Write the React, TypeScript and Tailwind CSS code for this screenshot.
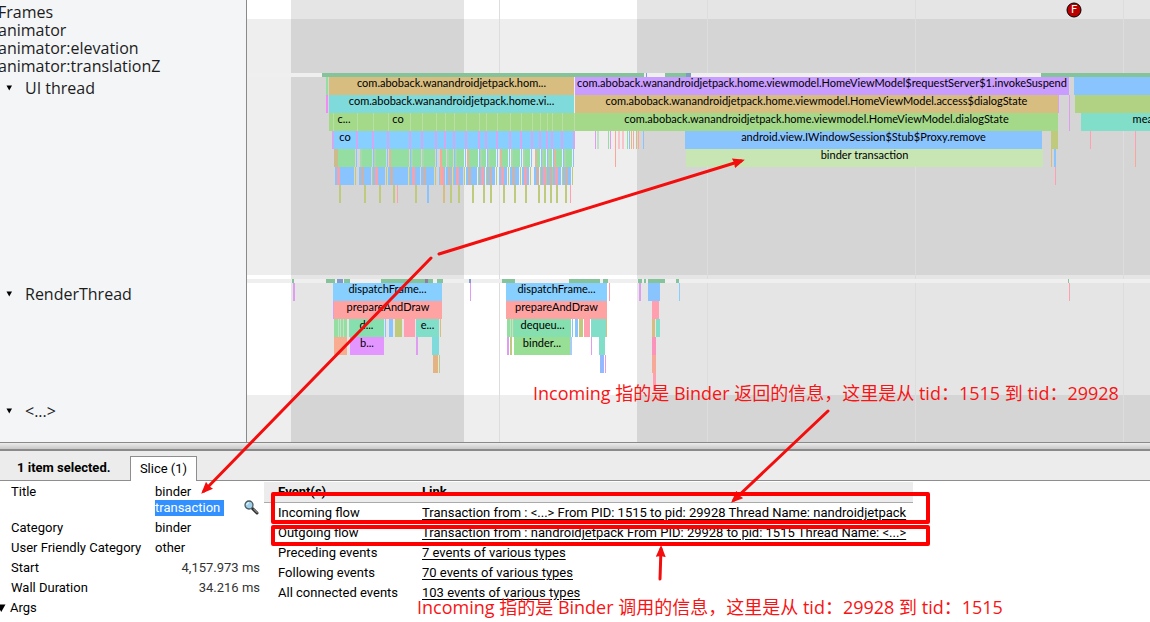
import { useState } from "react";

type Slice = {
  row: number;
  x: number;
  end: number;
  color: string;
  label?: string;
  labelX?: number;
};

const LABEL_WIDTH = 247;
const ROW_HEIGHT = 18;

const BLUE = "#8ac4ff";
const SKY = "#87cfff";
const GREEN = "#93dea0";
const LIME = "#a5d98a";
const TAN = "#d7be80";
const CYAN = "#7fdbdb";
const TEAL = "#80dec9";
const PINK = "#ff9fb0";
const SALMON = "#f7a896";
const ORCHID = "#df9df2";
const VIOLET = "#c99cff";
const OLIVE = "#c0ca7c";

const uiSlices: Slice[] = [
  { row: 0, x: 326, end: 328, color: GREEN },
  { row: 0, x: 329, end: 574, color: TAN, label: "com.aboback.wanandroidjetpack.hom..." },
  { row: 0, x: 575, end: 1069, color: VIOLET, label: "com.aboback.wanandroidjetpack.home.viewmodel.HomeViewModel$requestServer$1.invokeSuspend" },
  { row: 0, x: 1074, end: 2400, color: BLUE },
  { row: 1, x: 326, end: 328, color: "#f08cf2" },
  { row: 1, x: 329, end: 574, color: CYAN, label: "com.aboback.wanandroidjetpack.home.vi..." },
  { row: 1, x: 575, end: 1058, color: TAN, label: "com.aboback.wanandroidjetpack.home.viewmodel.HomeViewModel.access$dialogState" },
  { row: 1, x: 1058, end: 1059, color: ORCHID },
  { row: 1, x: 1069, end: 1070, color: ORCHID },
  { row: 1, x: 1075, end: 2400, color: "#b1d183" },
  { row: 2, x: 329, end: 574, color: LIME },
  { row: 2, x: 575, end: 1058, color: LIME, label: "com.aboback.wanandroidjetpack.home.viewmodel.HomeViewModel.dialogState" },
  { row: 2, x: 1069, end: 1070, color: ORCHID },
  { row: 2, x: 1081, end: 2400, color: TEAL, label: "measure", labelX: 1153 },
  { row: 3, x: 333, end: 575, color: SKY },
  { row: 3, x: 595, end: 596, color: ORCHID },
  { row: 3, x: 597, end: 599, color: "#bfe3c6" },
  { row: 3, x: 608, end: 609, color: GREEN },
  { row: 3, x: 610, end: 611, color: ORCHID },
  { row: 3, x: 615, end: 616, color: SALMON },
  { row: 3, x: 618, end: 620, color: "#f8c3c9" },
  { row: 3, x: 622, end: 624, color: "#f8c3c9" },
  { row: 3, x: 627, end: 628, color: GREEN },
  { row: 3, x: 629, end: 630, color: BLUE },
  { row: 3, x: 631, end: 632, color: TAN },
  { row: 3, x: 633, end: 634, color: SALMON },
  { row: 3, x: 636, end: 637, color: TAN },
  { row: 3, x: 638, end: 639, color: SALMON },
  { row: 3, x: 643, end: 644, color: BLUE },
  { row: 3, x: 685, end: 1042, color: BLUE, label: "android.view.IWindowSession$Stub$Proxy.remove" },
  { row: 3, x: 1051, end: 1058, color: OLIVE },
  { row: 3, x: 1090, end: 1091, color: PINK },
  { row: 3, x: 1135, end: 1136, color: PINK },
  { row: 4, x: 615, end: 616, color: SALMON },
  { row: 4, x: 686, end: 1043, color: "#c8e6b4", label: "binder transaction" },
  { row: 4, x: 1051, end: 1052, color: TAN },
  { row: 4, x: 1054, end: 1056, color: BLUE },
  { row: 4, x: 1135, end: 1136, color: SALMON },
  { row: 5, x: 1055, end: 1056, color: PINK },
];

const renderSlices: Slice[] = [
  { row: 0, x: 293, end: 295, color: ORCHID },
  { row: 0, x: 333, end: 442, color: SKY, label: "dispatchFrame..." },
  { row: 0, x: 470, end: 471, color: ORCHID },
  { row: 0, x: 506, end: 607, color: SKY, label: "dispatchFrame..." },
  { row: 0, x: 609, end: 610, color: PINK },
  { row: 0, x: 639, end: 641, color: ORCHID },
  { row: 0, x: 648, end: 660, color: BLUE },
  { row: 0, x: 679, end: 680, color: SKY },
  { row: 0, x: 1069, end: 1070, color: PINK },
  { row: 1, x: 333, end: 334, color: ORCHID },
  { row: 1, x: 334, end: 442, color: "#ffa2a2", label: "prepareAndDraw" },
  { row: 1, x: 506, end: 607, color: "#ffa2a2", label: "prepareAndDraw" },
  { row: 1, x: 652, end: 659, color: PINK },
  { row: 2, x: 334, end: 347, color: GREEN },
  { row: 2, x: 349, end: 384, color: "#86dfae", label: "d..." },
  { row: 2, x: 385, end: 386, color: BLUE },
  { row: 2, x: 389, end: 393, color: BLUE },
  { row: 2, x: 395, end: 402, color: OLIVE },
  { row: 2, x: 404, end: 415, color: PINK },
  { row: 2, x: 416, end: 439, color: TEAL, label: "e..." },
  { row: 2, x: 440, end: 441, color: TAN },
  { row: 2, x: 507, end: 514, color: GREEN },
  { row: 2, x: 514, end: 571, color: "#86dfae", label: "dequeu..." },
  { row: 2, x: 572, end: 573, color: BLUE },
  { row: 2, x: 575, end: 578, color: BLUE },
  { row: 2, x: 579, end: 583, color: OLIVE },
  { row: 2, x: 584, end: 590, color: PINK },
  { row: 2, x: 591, end: 606, color: TEAL },
  { row: 2, x: 606, end: 607, color: TAN },
  { row: 2, x: 652, end: 655, color: TAN },
  { row: 2, x: 656, end: 660, color: TEAL },
  { row: 3, x: 334, end: 347, color: "#f8ac90" },
  { row: 3, x: 350, end: 384, color: "#e396ff", label: "b..." },
  { row: 3, x: 416, end: 418, color: ORCHID },
  { row: 3, x: 432, end: 439, color: CYAN },
  { row: 3, x: 507, end: 509, color: ORCHID },
  { row: 3, x: 510, end: 512, color: OLIVE },
  { row: 3, x: 514, end: 570, color: "#98de94", label: "binder..." },
  { row: 3, x: 570, end: 572, color: "#a8cdf5" },
  { row: 3, x: 591, end: 592, color: ORCHID },
  { row: 3, x: 599, end: 605, color: TEAL },
  { row: 3, x: 652, end: 656, color: "#fa94bb" },
  { row: 4, x: 433, end: 438, color: "#e3b384" },
  { row: 4, x: 439, end: 440, color: OLIVE },
  { row: 4, x: 600, end: 604, color: "#93baff" },
  { row: 4, x: 605, end: 606, color: ORCHID },
  { row: 4, x: 652, end: 656, color: SALMON },
  { row: 5, x: 653, end: 656, color: PINK },
];

// Boundaries between the short calls nested under the first UI slice.
const callEdges = [333, 357, 373, 388, 410, 422, 436, 445, 454, 466, 479, 486, 497, 510, 521, 532, 540, 547, 552, 562, 574];

const nestedCalls = [
  [338, 355], [362, 372], [376, 386], [391, 409], [413, 421], [424, 435], [442, 446],
  [449, 453], [457, 464], [469, 478], [482, 486], [490, 496], [502, 508], [513, 520],
  [525, 530], [537, 540], [544, 546], [550, 552], [556, 562], [566, 572],
];

const leafCalls = [
  { x: 339, color: OLIVE }, { x: 364, color: OLIVE }, { x: 379, color: OLIVE }, { x: 393, color: OLIVE },
  { x: 397, color: PINK }, { x: 415, color: OLIVE }, { x: 427, color: BLUE }, { x: 443, color: TAN },
  { x: 450, color: OLIVE }, { x: 458, color: OLIVE }, { x: 472, color: OLIVE }, { x: 483, color: OLIVE },
  { x: 490, color: OLIVE }, { x: 503, color: OLIVE }, { x: 514, color: OLIVE }, { x: 525, color: OLIVE },
  { x: 538, color: OLIVE }, { x: 544, color: OLIVE }, { x: 550, color: OLIVE }, { x: 556, color: OLIVE },
  { x: 565, color: OLIVE }, { x: 570, color: PINK },
];

const uiStates = [
  { x: 322, end: 644, color: "#85c49a" },
  { x: 646, end: 647, color: "#7f9fd0" },
  { x: 665, end: 686, color: "#85c49a" },
  { x: 686, end: 691, color: "#7b9fb8" },
  { x: 1041, end: 2400, color: "#85c49a" },
];

const renderStates = [
  { x: 292, end: 294, color: "#85c49a" },
  { x: 326, end: 335, color: "#85c49a" },
  { x: 337, end: 343, color: "#8399c8" },
  { x: 344, end: 350, color: "#85c49a" },
  { x: 381, end: 425, color: "#85c49a" },
  { x: 425, end: 428, color: "#8f7f9e" },
  { x: 428, end: 433, color: "#85c49a" },
  { x: 437, end: 443, color: "#85c49a" },
  { x: 469, end: 471, color: "#8399c8" },
  { x: 502, end: 515, color: "#85c49a" },
  { x: 569, end: 600, color: "#85c49a" },
  { x: 603, end: 608, color: "#85c49a" },
  { x: 638, end: 642, color: "#85c49a" },
  { x: 644, end: 646, color: "#85c49a" },
  { x: 648, end: 665, color: "#85c49a" },
  { x: 676, end: 679, color: "#85c49a" },
  { x: 1068, end: 1069, color: "#85c49a" },
];

const flows = [
  { event: "Incoming flow", link: "Transaction from : <...> From PID: 1515 to pid: 29928 Thread Name: nandroidjetpack" },
  { event: "Outgoing flow", link: "Transaction from : nandroidjetpack From PID: 29928 to pid: 1515 Thread Name: <...>" },
  { event: "Preceding events", link: "7 events of various types" },
  { event: "Following events", link: "70 events of various types" },
  { event: "All connected events", link: "103 events of various types" },
];

function Slices({ slices, top }: { slices: Slice[]; top: number }) {
  return (
    <>
      {slices.map((slice, index) => (
        <g key={index}>
          <rect
            x={slice.x}
            y={top + slice.row * ROW_HEIGHT}
            width={slice.end - slice.x}
            height={ROW_HEIGHT}
            fill={slice.color}
          />
          {slice.label ? (
            <text
              x={slice.labelX ?? (slice.x + slice.end) / 2}
              y={top + slice.row * ROW_HEIGHT + 10}
              textAnchor="middle"
            >
              {slice.label}
            </text>
          ) : null}
        </g>
      ))}
    </>
  );
}

function NestedCalls() {
  return (
    <>
      {callEdges.map((x) => (
        <g key={x}>
          <rect x={x} y={113} width={1} height={18} fill="#b9e0a4" />
          <rect x={x - 1} y={131} width={2} height={18} fill="#d2a8f0" />
        </g>
      ))}
      {nestedCalls.map(([x, end], index) => (
        <g key={x}>
          <rect x={x - 2} y={149} width={2} height={18} fill={index % 3 === 0 ? "#dcb99a" : "#a9d8ae"} />
          <rect x={x} y={149} width={end - x} height={18} fill={GREEN} />
          <rect x={end + 1} y={149} width={1} height={18} fill={BLUE} />
          <rect x={x - 3} y={167} width={end - x + 2} height={18} fill={BLUE} />
          <rect x={x - 1} y={167} width={3} height={18} fill={index % 2 === 0 ? "#f3a2b0" : "#c9b3ae"} />
          <rect x={end} y={167} width={1} height={18} fill={OLIVE} />
        </g>
      ))}
      <rect x={334} y={149} width={4} height={18} fill="#cdbb8c" />
      <rect x={440} y={149} width={2} height={36} fill={SALMON} />
      {leafCalls.map((leaf) => (
        <rect key={leaf.x} x={leaf.x} y={185} width={leaf.color === PINK ? 1 : 2} height={18} fill={leaf.color} />
      ))}
      <g textAnchor="middle">
        <text x={344} y={123}>c...</text>
        <text x={398} y={123}>co</text>
        <text x={345} y={141}>co</text>
      </g>
    </>
  );
}

function StateBar({ states, y }: { states: { x: number; end: number; color: string }[]; y: number }) {
  return (
    <>
      <rect x={247} y={y} width="100%" height={4} fill="#efefef" />
      {states.map((state) => (
        <rect key={state.x} x={state.x} y={y} width={state.end - state.x} height={4} fill={state.color} />
      ))}
    </>
  );
}

function TraceChart() {
  return (
    <svg
      aria-label="Thread timeline"
      className="h-[442px] min-w-0 flex-1 bg-white font-[Lato,'Open_Sans',sans-serif] text-[11px]"
      role="img"
    >
      <g transform={`translate(${-LABEL_WIDTH} 0)`}>
        <rect x={247} y={19} width="100%" height={256} fill="#eeeeee" />
        <rect x={247} y={395} width="100%" height={47} fill="#eeeeee" />
        <rect x={291} y={0} width={173} height={442} fill="#000" fillOpacity={0.1} />
        <rect x={637} y={0} width="100%" height={442} fill="#000" fillOpacity={0.1} />
        {[499, 707, 915, 1123].map((x) => (
          <rect key={x} x={x} y={0} width={1} height={442} fill="#dddddd" />
        ))}
        <StateBar states={uiStates} y={73} />
        <StateBar states={renderStates} y={279} />
        <Slices slices={uiSlices} top={77} />
        <NestedCalls />
        <Slices slices={renderSlices} top={283} />
        {[338, 340, 343, 510, 512].map((x) => (
          <rect key={x} x={x} y={319} width={1} height={18} fill="#bfe3c6" />
        ))}
        <circle cx={1074} cy={10} r={7} fill="#bb0000" stroke="#000" />
        <text x={1074} y={13} fill="#fff" textAnchor="middle">F</text>
      </g>
    </svg>
  );
}

function LaneLabel({ name }: { name: string }) {
  const [open, setOpen] = useState(true);

  return (
    <button
      aria-expanded={open}
      className="flex h-[26px] items-center gap-3 pl-1.5 text-left"
      onClick={() => setOpen(!open)}
      type="button"
    >
      <svg aria-hidden="true" className="h-1.5 w-[7px]" viewBox="0 0 7 6">
        <path d="M0.5 0.5h5.5L3.25 5.5z" fill="#000" />
      </svg>
      <span>{name}</span>
    </button>
  );
}

function LaneLabels() {
  return (
    <aside className="w-[247px] shrink-0 overflow-hidden border-r border-[#8a8a8a] bg-[#f3f5f7] pt-[3px] font-['Open_Sans','Noto_Sans',sans-serif] text-[16px] leading-[18px] text-[#1c1c1c]">
      <div className="-ml-0.5">
        <p>Frames</p>
        <p>animator</p>
        <p>animator:elevation</p>
        <p>animator:translationZ</p>
      </div>
      <div className="h-[206px]">
        <LaneLabel name="UI thread" />
      </div>
      <div className="h-[117px]">
        <LaneLabel name="RenderThread" />
      </div>
      <LaneLabel name="<...>" />
    </aside>
  );
}

function MagnifierIcon() {
  return (
    <svg aria-hidden="true" className="h-4 w-4" viewBox="0 0 16 16">
      <path d="M8.5 8.5l4.5 4.5" stroke="#2b2b2b" strokeWidth="3" strokeLinecap="round" />
      <path d="M9.8 9.2l3.4 3.4" stroke="#8b8d90" strokeWidth="1.1" strokeLinecap="round" />
      <circle cx="5" cy="5" r="4" fill="#9fd0ea" stroke="#4b5962" strokeWidth="1.3" />
      <path d="M2.8 5a2.3 2.3 0 0 1 2.3-2.3" fill="none" stroke="#e5f6ff" strokeWidth="1.2" />
    </svg>
  );
}

function SliceDetails() {
  return (
    <table className="w-[264px] shrink-0 table-fixed border-collapse self-start text-left">
      <colgroup>
        <col className="w-[155px]" />
        <col />
      </colgroup>
      <tbody>
        <tr className="h-9 align-top">
          <th className="pt-0.5 pl-[11px] font-normal leading-4" scope="row">Title</th>
          <td className="pt-0.5 leading-4">
            <div className="flex items-end justify-between pr-1">
              <div>
                binder
                <br />
                <span className="block bg-[#3390ff] pr-1 text-white">transaction</span>
              </div>
              <button aria-label="Find slices with this title" type="button">
                <MagnifierIcon />
              </button>
            </div>
          </td>
        </tr>
        <tr className="h-5">
          <th className="pl-[11px] font-normal" scope="row">Category</th>
          <td>binder</td>
        </tr>
        <tr className="h-5">
          <th className="pl-[11px] font-normal whitespace-nowrap" scope="row">User Friendly Category</th>
          <td>other</td>
        </tr>
        <tr className="h-5">
          <th className="pl-[11px] font-normal" scope="row">Start</th>
          <td className="pr-1 text-right text-[#333]">4,157.973 ms</td>
        </tr>
        <tr className="h-5">
          <th className="pl-[11px] font-normal" scope="row">Wall Duration</th>
          <td className="pr-1 text-right text-[#333]">34.216 ms</td>
        </tr>
        <tr className="h-5">
          <th className="font-normal" colSpan={2} scope="row">
            <button className="flex items-center gap-1" type="button">
              <svg aria-hidden="true" className="h-2 w-1.5" viewBox="0 0 6 8">
                <path d="M-3 0.5h8.5L1.25 8z" fill="#000" />
              </svg>
              Args
            </button>
          </th>
        </tr>
      </tbody>
    </table>
  );
}

function FlowEvents() {
  return (
    <table className="w-[649px] table-fixed self-start border-collapse text-left">
      <colgroup>
        <col className="w-[158px]" />
        <col />
      </colgroup>
      <thead>
        <tr className="h-5 border-b border-[#aaa] bg-[#ececec]">
          <th className="pl-3.5 font-bold" scope="col">Event(s)</th>
          <th className="font-bold" scope="col">Link</th>
        </tr>
      </thead>
      <tbody>
        {flows.map((flow) => (
          <tr className="h-5" key={flow.event}>
            <td className="pl-3.5 whitespace-nowrap">{flow.event}</td>
            <td className="whitespace-nowrap">
              <a className="underline underline-offset-2" href="#flow">{flow.link}</a>
            </td>
          </tr>
        ))}
      </tbody>
    </table>
  );
}

function Annotations() {
  return (
    <svg
      aria-label="Notes"
      className="pointer-events-none absolute inset-0 h-full w-full font-['Open_Sans','Noto_Sans_CJK_SC',sans-serif] text-[18px]"
      role="img"
    >
      <defs>
        <marker id="head" markerHeight="12" markerUnits="userSpaceOnUse" markerWidth="14" orient="auto" refX="8" refY="5">
          <path d="M0 0L12 5L0 10L1 5z" fill="#f40d0d" />
        </marker>
      </defs>
      <g fill="none" stroke="#f40d0d" strokeLinecap="round" strokeWidth="3">
        <path d="M439 254L741 161" markerEnd="url(#head)" />
        <path d="M431 258L204 491" markerEnd="url(#head)" />
        <path d="M828 411L734 500" markerEnd="url(#head)" />
        <path d="M660 579L661 549" markerEnd="url(#head)" />
      </g>
      <g fill="none" stroke="#ff0000" strokeLinejoin="round" strokeWidth="4">
        <rect height="28" width="655" x="273" y="494" />
        <rect height="17" width="655" x="273" y="527" />
      </g>
      <g fill="#f81414">
        <text x="533" y="400">Incoming 指的是 Binder 返回的信息，这里是从 tid：1515 到 tid：29928</text>
        <text x="417" y="614">Incoming 指的是 Binder 调用的信息，这里是从 tid：29928 到 tid：1515</text>
      </g>
    </svg>
  );
}

export default function App() {
  return (
    <main className="relative min-h-screen overflow-hidden bg-white font-[Roboto,'Open_Sans',sans-serif] text-[13px] leading-5 text-black">
      <section className="flex">
        <LaneLabels />
        <TraceChart />
      </section>
      <div className="h-[9px] border-t border-b-2 border-t-[#8a8a8a] border-b-[#8a8a8a] bg-linear-to-b from-[#ececec] to-[#c8c8c8]" />
      <header className="flex h-[30px] items-end border-b border-[#8e8e8e] bg-[#ececec]">
        <h1 className="w-[130px] pb-0.5 pl-[17px] font-bold whitespace-nowrap">1 item selected.</h1>
        <div role="tablist">
          <button
            aria-selected="true"
            className="-mb-px block h-[25px] w-[67px] border border-b-0 border-[#8e8e8e] bg-white whitespace-nowrap"
            role="tab"
            type="button"
          >
            Slice (1)
          </button>
        </div>
      </header>
      <section className="flex pt-px">
        <SliceDetails />
        <FlowEvents />
      </section>
      <Annotations />
    </main>
  );
}
